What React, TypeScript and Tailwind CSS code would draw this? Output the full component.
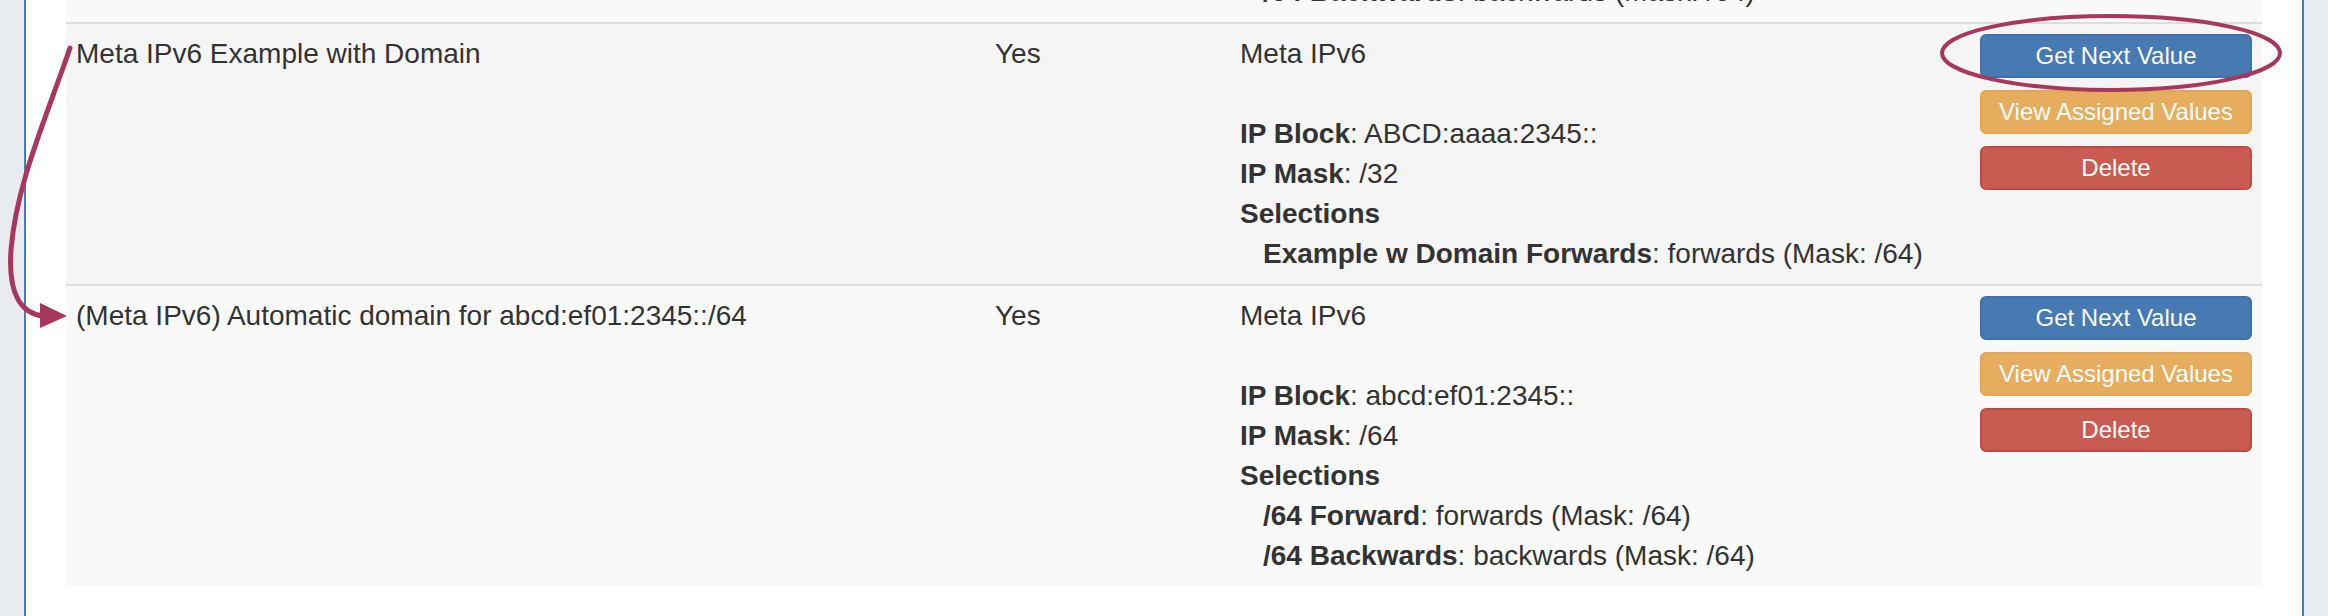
import React from "react";

const Btns = () => (
  <div className="flex flex-col gap-[12px]">
    <div className="w-[272px] rounded-[6px] border-2 border-[#4270a8] bg-[#4779b2] py-[2px] text-center text-[24px] leading-[36px] text-white">
      Get Next Value
    </div>
    <div className="w-[272px] rounded-[6px] border-2 border-[#e3a653] bg-[#e6ad5e] py-[2px] text-center text-[24px] leading-[36px] text-white">
      View Assigned Values
    </div>
    <div className="w-[272px] rounded-[6px] border-2 border-[#c24a41] bg-[#c95b53] py-[2px] text-center text-[24px] leading-[36px] text-white">
      Delete
    </div>
  </div>
);

const Line = ({ label, value, indent }: { label: string; value?: string; indent?: boolean }) => (
  <div className={indent ? "pl-[23px]" : ""}>
    <span className="font-bold">{label}</span>
    {value !== undefined ? <>: {value}</> : null}
  </div>
);

export default function App() {
  return (
    <div
      className="relative flex h-[616px] w-[2328px] overflow-hidden bg-white text-[28px] leading-[40px] text-[#333]"
      style={{ fontFamily: '"Liberation Sans", Arial, sans-serif' }}
    >
      <div className="w-[24px] shrink-0 bg-[#e8ecf0]" />
      <div className="w-[2px] shrink-0 bg-[#4a7db8]" />
      <div className="flex-1 px-[40px]">
        {/* Row 1 (cut off at top) */}
        <div className="flex h-[22px] bg-[#f9f9f9]">
          <div className="w-[919px] shrink-0" />
          <div className="w-[245px] shrink-0" />
          <div className="w-[740px] shrink-0 px-[10px]">
            <div className="-mt-[28px] whitespace-nowrap">
              <Line label="/64 Backwards" value="backwards (Mask: /64)" indent />
            </div>
          </div>
          <div className="w-[292px] shrink-0" />
        </div>

        {/* Row 2 */}
        <div className="flex border-t-2 border-[#dddddd] bg-[#f5f5f5]">
          <div className="w-[919px] shrink-0 p-[10px]">Meta IPv6 Example with Domain</div>
          <div className="w-[245px] shrink-0 p-[10px]">Yes</div>
          <div className="w-[740px] shrink-0 p-[10px] whitespace-nowrap">
            <div>Meta IPv6</div>
            <div className="h-[40px]" />
            <Line label="IP Block" value="ABCD:aaaa:2345::" />
            <Line label="IP Mask" value="/32" />
            <Line label="Selections" />
            <Line label="Example w Domain Forwards" value="forwards (Mask: /64)" indent />
          </div>
          <div className="w-[292px] shrink-0 p-[10px]">
            <Btns />
          </div>
        </div>

        {/* Row 3 */}
        <div className="flex border-t-2 border-[#dddddd] bg-[#f9f9f9]">
          <div className="w-[919px] shrink-0 p-[10px]">(Meta IPv6) Automatic domain for abcd:ef01:2345::/64</div>
          <div className="w-[245px] shrink-0 p-[10px]">Yes</div>
          <div className="w-[740px] shrink-0 p-[10px] whitespace-nowrap">
            <div>Meta IPv6</div>
            <div className="h-[40px]" />
            <Line label="IP Block" value="abcd:ef01:2345::" />
            <Line label="IP Mask" value="/64" />
            <Line label="Selections" />
            <Line label="/64 Forward" value="forwards (Mask: /64)" indent />
            <Line label="/64 Backwards" value="backwards (Mask: /64)" indent />
          </div>
          <div className="w-[292px] shrink-0 p-[10px]">
            <Btns />
          </div>
        </div>
      </div>
      <div className="w-[2px] shrink-0 bg-[#4a7db8]" />
      <div className="w-[24px] shrink-0 bg-[#e8ecf0]" />

      <svg
        className="pointer-events-none absolute left-0 top-0"
        width="2328"
        height="616"
        viewBox="0 0 2328 616"
      >
        <path
          d="M70 48 C46 118 16 185 11 250 C8 292 20 314 44 316"
          fill="none"
          stroke="#a8375c"
          strokeWidth="5"
          strokeLinecap="round"
        />
        <polygon points="40,303 67,316 40,328" fill="#a8375c" />
        <ellipse cx="2111" cy="53" rx="169" ry="37" fill="none" stroke="#a8375c" strokeWidth="4" />
      </svg>
    </div>
  );
}
